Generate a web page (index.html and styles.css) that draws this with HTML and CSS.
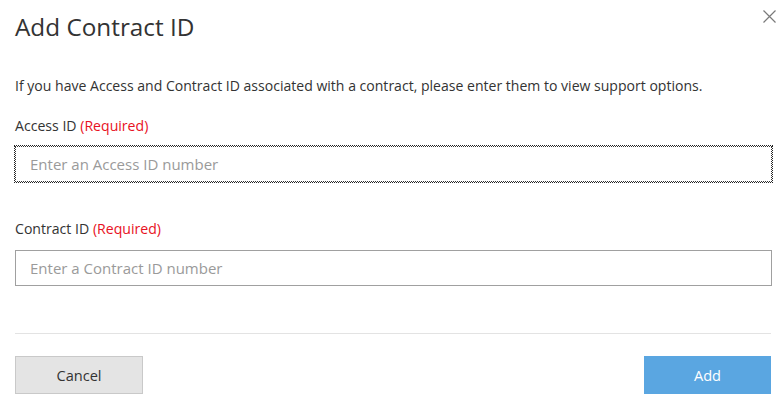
FILE: index.html
```html
<!DOCTYPE html>
<html lang="en">
<head>
<meta charset="utf-8">
<title>Add Contract ID</title>
<link rel="stylesheet" href="styles.css">
</head>
<body>
<div class="dialog">
  <button class="close" aria-label="Close">
    <svg width="13" height="13" viewBox="0 0 13 13"><path d="M0.5 0.5 L12.5 12.5 M12.5 0.5 L0.5 12.5" stroke="#7a7a7a" stroke-width="1.2" fill="none"/></svg>
  </button>
  <h1 class="title">Add Contract ID</h1>
  <p class="desc">If you have Access and Contract ID associated with a contract, please enter them to view support options.</p>
  <label class="label label-first" for="access">Access ID <span class="req">(Required)</span></label>
  <input class="field field-focus" id="access" type="text" placeholder="Enter an Access ID number">
  <label class="label label-second" for="contract">Contract ID <span class="req">(Required)</span></label>
  <input class="field" id="contract" type="text" placeholder="Enter a Contract ID number">
  <div class="sep"></div>
  <div class="footer">
    <button class="btn btn-cancel">Cancel</button>
    <button class="btn btn-add">Add</button>
  </div>
</div>
</body>
</html>
```
FILE: styles.css
```css
html, body {
  margin: 0;
  padding: 0;
  background: #fff;
}
body {
  font-family: "Open Sans", "Noto Sans", sans-serif;
  color: #333;
}
.dialog {
  position: relative;
  width: 780px;
  height: 405px;
  box-sizing: border-box;
  padding: 12px 8px 0 15px;
  display: flex;
  flex-direction: column;
}
.close {
  position: absolute;
  left: 763px;
  top: 10px;
  width: 13px;
  height: 13px;
  padding: 0;
  border: 0;
  background: none;
  display: block;
}
.close svg { display: block; }
.title {
  margin: 0;
  font-size: 24.3px;
  line-height: 30px;
  font-weight: 400;
  color: #333;
}
.desc {
  margin: 34px 0 0;
  font-size: 14.05px;
  line-height: 20px;
  color: #333;
}
.label {
  display: block;
  font-size: 14.1px;
  line-height: 20px;
  color: #333;
}
.label-first { margin-top: 20px; }
.label-second { margin-top: 37px; }
.req { color: #e81123; }
.field {
  display: block;
  box-sizing: border-box;
  width: 757px;
  height: 36px;
  margin: 10px 0 0;
  padding: 0 14px;
  border: 1px solid #a0a0a0;
  border-radius: 0;
  font-family: inherit;
  font-size: 15px;
  color: #333;
  background: #fff;
}
.field::placeholder { color: #9a9a9a; }
.field-focus {
  border: 1px dotted #333;
  outline: 1px dotted #222;
  outline-offset: 0;
}
.label-second + .field { margin-top: 11px; }
.sep {
  margin-top: 47px;
  height: 1px;
  width: 756px;
  background: #e3e3e3;
}
.footer {
  margin-top: 22px;
  width: 756px;
  display: flex;
  justify-content: space-between;
}
.btn {
  box-sizing: border-box;
  height: 38px;
  font-family: inherit;
  font-size: 14.6px;
  padding: 0;
  border-radius: 0;
}
.btn-cancel {
  width: 128px;
  background: #e4e4e4;
  border: 1px solid #c9c9c9;
  color: #333;
}
.btn-add {
  width: 127px;
  background: #5aa6e1;
  border: 1px solid #5aa6e1;
  color: #fff;
}
```
